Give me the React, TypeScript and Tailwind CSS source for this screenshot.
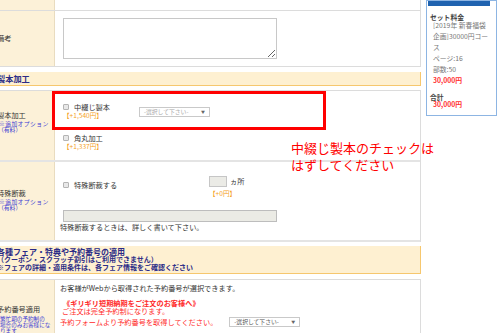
import React from "react";

function Check() {
  return <span className="inline-block w-[6px] h-[6px] shrink-0 border border-[#b4b4b4] bg-[#e8e8e8] rounded-[1px]" />;
}

function Select({ dim }: { dim?: boolean }) {
  return (
    <div className="flex items-center justify-between w-[71px] h-[10px] border border-[#c9c9c9] bg-white pl-[4px] pr-[4px]">
      <span className={dim ? "text-[5.8px] leading-none text-[#a8a8a8]" : "text-[5.8px] leading-none text-[#555]"}>-選択して下さい-</span>
      <span className="text-[4px] leading-none text-[#666]">▼</span>
    </div>
  );
}

function OptionLabel({ title, top }: { title: string; top: string }) {
  return (
    <div className={`w-[65px] shrink-0 bg-[#fcf1d8] border-r border-[#e9dcc0] pl-[7px] ${top}`}>
      <div className="text-[7.2px] leading-[8px]">{title}</div>
      <div className="mt-[2px] ml-[2px] text-[5.8px] leading-[6px] tracking-[0.4px] text-[#3b3bd4] whitespace-nowrap">※追加オプション</div>
      <div className="ml-[1px] text-[5.8px] leading-[6px] text-[#3b3bd4]">（有料）</div>
    </div>
  );
}

export default function App() {
  return (
    <div className="relative flex items-start w-[500px] h-[333px] overflow-hidden bg-white text-[#333] font-['Noto_Sans_CJK_JP',sans-serif]">
      {/* main form */}
      <div className="ml-[-10px] w-[431px] shrink-0">
        <div className="flex h-[11px] border-b border-r border-[#dcdcdc]">
          <div className="w-[65px] bg-[#fcf1d8] border-r border-[#e9dcc0]" />
          <div className="flex-1" />
        </div>
        <div className="flex h-[56px] border-b border-r border-[#dcdcdc]">
          <div className="w-[65px] shrink-0 flex items-center bg-[#fcf1d8] border-r border-[#e9dcc0] pl-[7px] text-[7.2px]">備考</div>
          <div className="flex-1 pl-[8px] pt-[7px]">
            <textarea readOnly className="block w-[214px] h-[41px] border border-[#c8c8c8] bg-white" />
          </div>
        </div>

        <div className="mt-[5px] h-[14px] bg-[#fef0d1] border-b border-r border-[#f6c76e] pl-[7px] text-[8.2px] leading-[13px] font-bold text-[#2b2b86]">
          製本加工
        </div>

        <div className="mt-[4px] border-t border-r border-[#dcdcdc]">
          <div className="flex h-[71px] border-b-2 border-[#e4e4e4]">
            <OptionLabel title="製本加工" top="pt-[20px]" />
            <div className="flex-1 pl-[8px] pt-[12px] text-[7.2px] leading-[8px]">
              <div className="flex">
                <div className="w-[76px]">
                  <div className="flex items-center h-[8px]">
                    <Check />
                    <span className="ml-[5px]">中綴じ製本</span>
                  </div>
                  <div className="text-[6.6px] text-[#f5a11c]">【+1,540円】</div>
                </div>
                <div className="mt-[4px]">
                  <Select dim />
                </div>
              </div>
              <div className="mt-[15px]">
                <div className="flex items-center h-[8px]">
                  <Check />
                  <span className="ml-[5px]">角丸加工</span>
                </div>
                <div className="text-[6.6px] text-[#f5a11c]">【+1,337円】</div>
              </div>
            </div>
          </div>

          <div className="flex h-[80px] border-b-2 border-[#e4e4e4]">
            <OptionLabel title="特殊断裁" top="pt-[27px]" />
            <div className="flex-1 pl-[8px] pt-[14px] text-[7.2px] leading-[8px]">
              <div className="flex">
                <div className="w-[146px] mt-[5px] flex items-center h-[8px]">
                  <Check />
                  <span className="ml-[5px]">特殊断裁する</span>
                </div>
                <div>
                  <div className="flex items-start">
                    <div className="w-[18px] h-[11px] border border-[#c6c6c6] bg-[#ebebe6]" />
                    <span className="ml-[3px] mt-[1px]">ヵ所</span>
                  </div>
                  <div className="mt-[2px] text-[6.6px] text-[#f5a11c]">【+0円】</div>
                </div>
              </div>
              <div className="mt-[13px] w-[214px] h-[12px] border border-[#bdbdbd] bg-[#ebebe5]" />
              <div className="mt-[1px] ml-[-3px]">特殊断裁するときは、詳しく書いて下さい。</div>
            </div>
          </div>
        </div>

        <div className="mt-[4px] h-[28px] bg-[#fef0d1] border-b border-r border-[#f6c76e] pl-[7px] pt-[2px] font-bold text-[#2b2b86] whitespace-nowrap">
          <div className="text-[8px] leading-[8px]">各種フェア・特典や予約番号の適用</div>
          <div className="text-[7px] leading-[7.5px]">（クーポン・スクラッチ割引はご利用できません）</div>
          <div className="text-[7px] leading-[7px]">※フェアの詳細・適用条件は、各フェア情報をご確認ください</div>
        </div>

        <div className="mt-[5px] border-t border-r border-[#dcdcdc]">
          <div className="flex h-[70px]">
            <div className="w-[65px] shrink-0 bg-[#fcf1d8] border-r border-[#e9dcc0] pl-[7px] pt-[25px]">
              <div className="text-[7.2px] leading-[8px]">予約番号適用</div>
              <div className="mt-[3px] ml-[3px] text-[5.6px] leading-[6px] text-[#3b3bd4] whitespace-nowrap">
                <div>繁忙期の予約制の</div>
                <div>場合のみお客様にな</div>
                <div>ります</div>
              </div>
            </div>
            <div className="flex-1 pl-[5px] pt-[4px] text-[7.2px] leading-[8px] whitespace-nowrap">
              <div>お客様がWebから取得された予約番号が選択できます。</div>
              <div className="mt-[7px] ml-[3px] font-bold text-[#ff2a2a]">《ギリギリ短期納期をご注文のお客様へ》</div>
              <div className="ml-[2px] text-[#ff2a2a]">ご注文は完全予約制になります。</div>
              <div className="mt-[2px] flex items-center h-[10px]">
                <span className="text-[#ff2a2a]">予約フォームより予約番号を取得してください。</span>
                <div className="ml-[12px]">
                  <Select />
                </div>
              </div>
            </div>
          </div>
        </div>
      </div>

      {/* price sidebar */}
      <div className="ml-[5px] w-[71px] h-[116px] shrink-0 border border-[#8db5e3] text-[6.8px] whitespace-nowrap">
        <div className="ml-[1px] w-[62px] h-[5px] bg-[#1f63b0]" />
        <div className="mt-[8px] pl-[3px] leading-[7px] font-bold text-[#444]">セット料金</div>
        <div className="mt-[-1.5px] pl-[6px] leading-[11px] text-[#777]">
          <div>[2019年 新春福袋</div>
          <div>企画]30000円コー</div>
          <div>ス</div>
          <div>ページ:16</div>
          <div>部数:50</div>
          <div className="font-bold text-[#ff3030]">30,000円</div>
        </div>
        <div className="mt-[8.5px] pl-[3px] leading-[7px] font-bold text-[#444]">合計</div>
        <div className="pl-[6px] leading-[7px] font-bold text-[#ff3030]">30,000円</div>
      </div>

      {/* annotation overlays */}
      <div className="absolute left-[52px] top-[91px] w-[274px] h-[39px] border-[3px] border-[#ff0000]" />
      <div className="absolute left-[291px] top-[139px] text-[13px] leading-[17px] text-[#ff0000] whitespace-nowrap">
        <div>中綴じ製本のチェックは</div>
        <div>はずしてください</div>
      </div>
    </div>
  );
}
